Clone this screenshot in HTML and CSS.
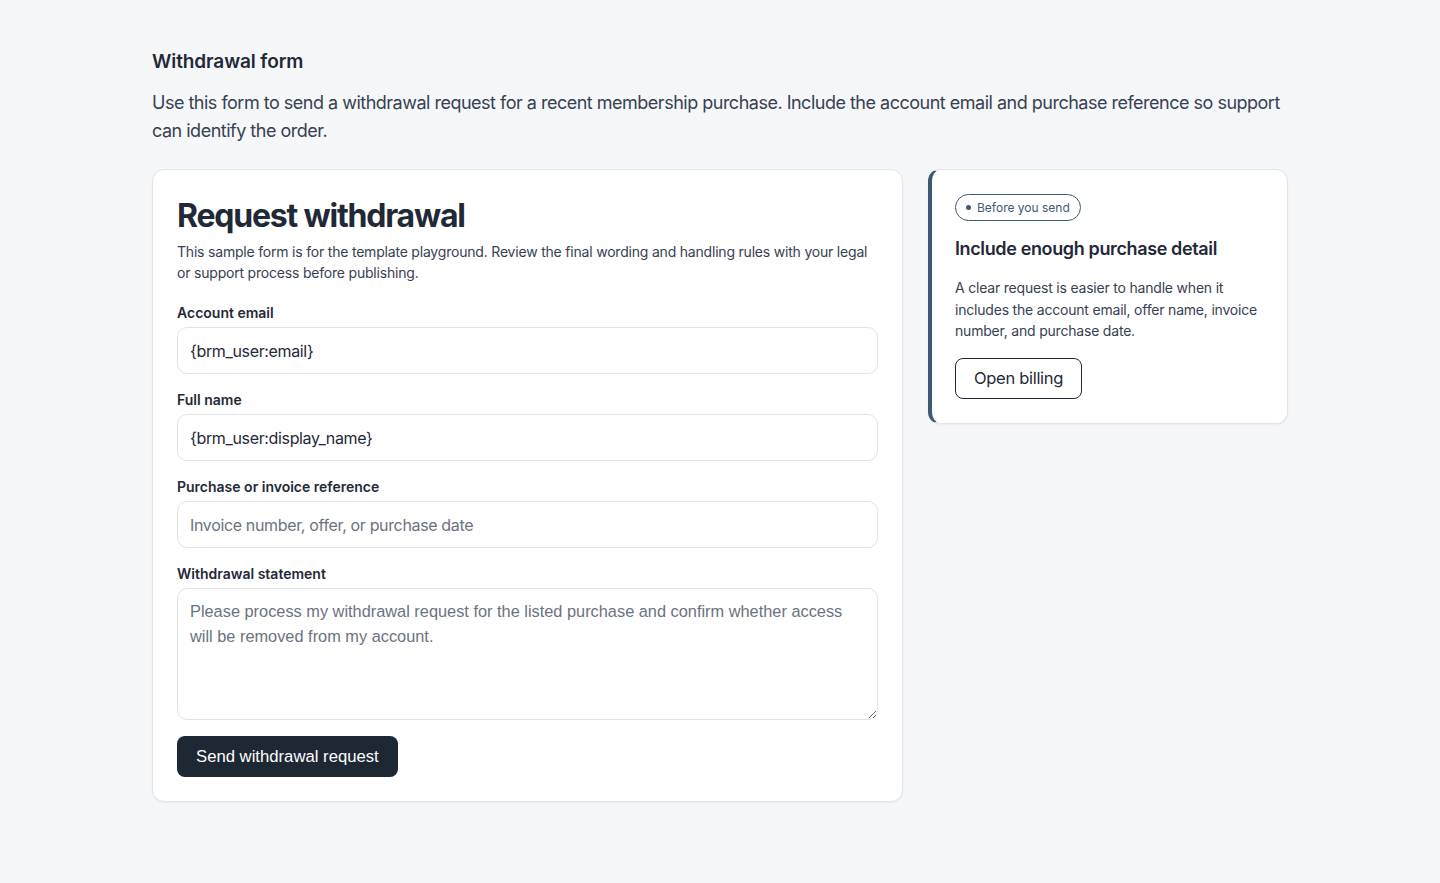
FILE: index.html
```html
<!DOCTYPE html>
<html lang="en">
<head>
<meta charset="utf-8">
<title>Withdrawal form</title>
<link rel="stylesheet" href="styles.css">
</head>
<body>
<main class="page">
  <header class="intro">
    <h1 class="intro-title">Withdrawal form</h1>
    <p class="intro-text">Use this form to send a withdrawal request for a recent membership purchase. Include the account email and purchase reference so support can identify the order.</p>
  </header>
  <div class="layout">
    <form class="card form-card">
      <h2 class="form-title">Request withdrawal</h2>
      <p class="form-note">This sample form is for the template playground. Review the final wording and handling rules with your legal or support process before publishing.</p>
      <div class="field">
        <label class="label" for="email">Account email</label>
        <input class="input" id="email" type="text" value="{brm_user:email}">
      </div>
      <div class="field">
        <label class="label" for="name">Full name</label>
        <input class="input" id="name" type="text" value="{brm_user:display_name}">
      </div>
      <div class="field">
        <label class="label" for="ref">Purchase or invoice reference</label>
        <input class="input" id="ref" type="text" placeholder="Invoice number, offer, or purchase date">
      </div>
      <div class="field">
        <label class="label" for="statement">Withdrawal statement</label>
        <textarea class="textarea" id="statement" placeholder="Please process my withdrawal request for the listed purchase and confirm whether access will be removed from my account."></textarea>
      </div>
      <div class="actions">
        <button class="btn-primary" type="button">Send withdrawal request</button>
      </div>
    </form>
    <aside class="card side-card">
      <span class="badge"><span class="badge-dot"></span>Before you send</span>
      <h3 class="side-title">Include enough purchase detail</h3>
      <p class="side-text">A clear request is easier to handle when it includes the account email, offer name, invoice number, and purchase date.</p>
      <a class="btn-outline" href="#">Open billing</a>
    </aside>
  </div>
</main>
</body>
</html>
```

FILE: styles.css
```css
* { box-sizing: border-box; }
html, body { margin: 0; padding: 0; }
body {
  background: #f6f7f9;
  font-family: Inter, "Noto Sans", sans-serif;
  color: #1f2937;
}
.page {
  width: 1136px;
  margin: 0 auto;
  padding: 48px 0 40px;
}
.intro-title {
  margin: 0;
  font-size: 19px;
  font-weight: 600;
  line-height: 28px;
  color: #1f2937;
  letter-spacing: -0.1px;
}
.intro-text {
  margin: 13px 0 0;
  font-size: 18px;
  line-height: 28px;
  color: #374151;
  letter-spacing: -0.5px;
}
.layout {
  margin-top: 24px;
  display: grid;
  grid-template-columns: 751px 360px;
  gap: 25px;
  align-items: start;
}
.card {
  background: #ffffff;
  border: 1px solid #e1e4e8;
  border-radius: 12px;
  box-shadow: 0 1px 2px rgba(16, 24, 40, 0.05);
}
.form-card {
  padding: 24px;
  margin: 0;
}
.form-title {
  margin: 0;
  font-size: 32px;
  font-weight: 700;
  line-height: 44px;
  color: #1f2937;
  letter-spacing: -1.2px;
}
.form-note {
  margin: 3px 0 0;
  font-size: 14px;
  line-height: 21px;
  color: #374151;
  letter-spacing: -0.2px;
}
.field {
  margin-top: 20px;
  display: flex;
  flex-direction: column;
}
.field + .field { margin-top: 16px; }
.label {
  font-size: 14px;
  font-weight: 600;
  line-height: 20px;
  color: #1f2937;
  margin-bottom: 4px;
}
.input {
  height: 47px;
  width: 100%;
  border: 1px solid #dfe3e8;
  border-radius: 10px;
  padding: 0 12px;
  font-family: Inter, "Noto Sans", sans-serif;
  font-size: 16px;
  letter-spacing: -0.35px;
  color: #1f2937;
  background: #fff;
  outline: none;
}
.input::placeholder { color: #6b7280; }
.textarea {
  width: 100%;
  height: 132px;
  border: 1px solid #dfe3e8;
  border-radius: 10px;
  padding: 10px 12px;
  font-family: "Liberation Sans", Arial, sans-serif;
  font-size: 16.35px;
  line-height: 25px;
  color: #1f2937;
  background: #fff;
  resize: vertical;
  outline: none;
}
.textarea::placeholder { color: #6b7280; }
.actions { margin-top: 16px; }
.btn-primary {
  height: 41px;
  padding: 0 19px;
  border: none;
  border-radius: 8px;
  background: #1e2734;
  color: #ffffff;
  font-family: "Liberation Sans", Arial, sans-serif;
  font-size: 16.7px;
  cursor: pointer;
}
.side-card {
  border-left: 4px solid #3f5873;
  padding: 24px 24px 24px 23px;
  display: flex;
  flex-direction: column;
  align-items: flex-start;
}
.badge {
  display: inline-flex;
  align-items: center;
  gap: 6px;
  height: 27px;
  padding: 0 10px;
  border: 1px solid #3f5873;
  border-radius: 999px;
  font-size: 12px;
  color: #3f5873;
  background: #fff;
}
.badge-dot {
  width: 5px;
  height: 5px;
  border-radius: 50%;
  background: #3f5873;
}
.side-title {
  margin: 15px 0 0;
  font-size: 18px;
  font-weight: 600;
  line-height: 26px;
  color: #1f2937;
  letter-spacing: -0.37px;
}
.side-text {
  margin: 15px 0 0;
  font-size: 14px;
  line-height: 21.5px;
  color: #374151;
  letter-spacing: -0.2px;
}
.btn-outline {
  margin-top: 16px;
  display: inline-flex;
  align-items: center;
  height: 41px;
  padding: 0 18px;
  border: 1px solid #1f2937;
  border-radius: 8px;
  color: #1f2937;
  text-decoration: none;
  font-size: 16.5px;
  letter-spacing: -0.3px;
  background: #fff;
}
```
